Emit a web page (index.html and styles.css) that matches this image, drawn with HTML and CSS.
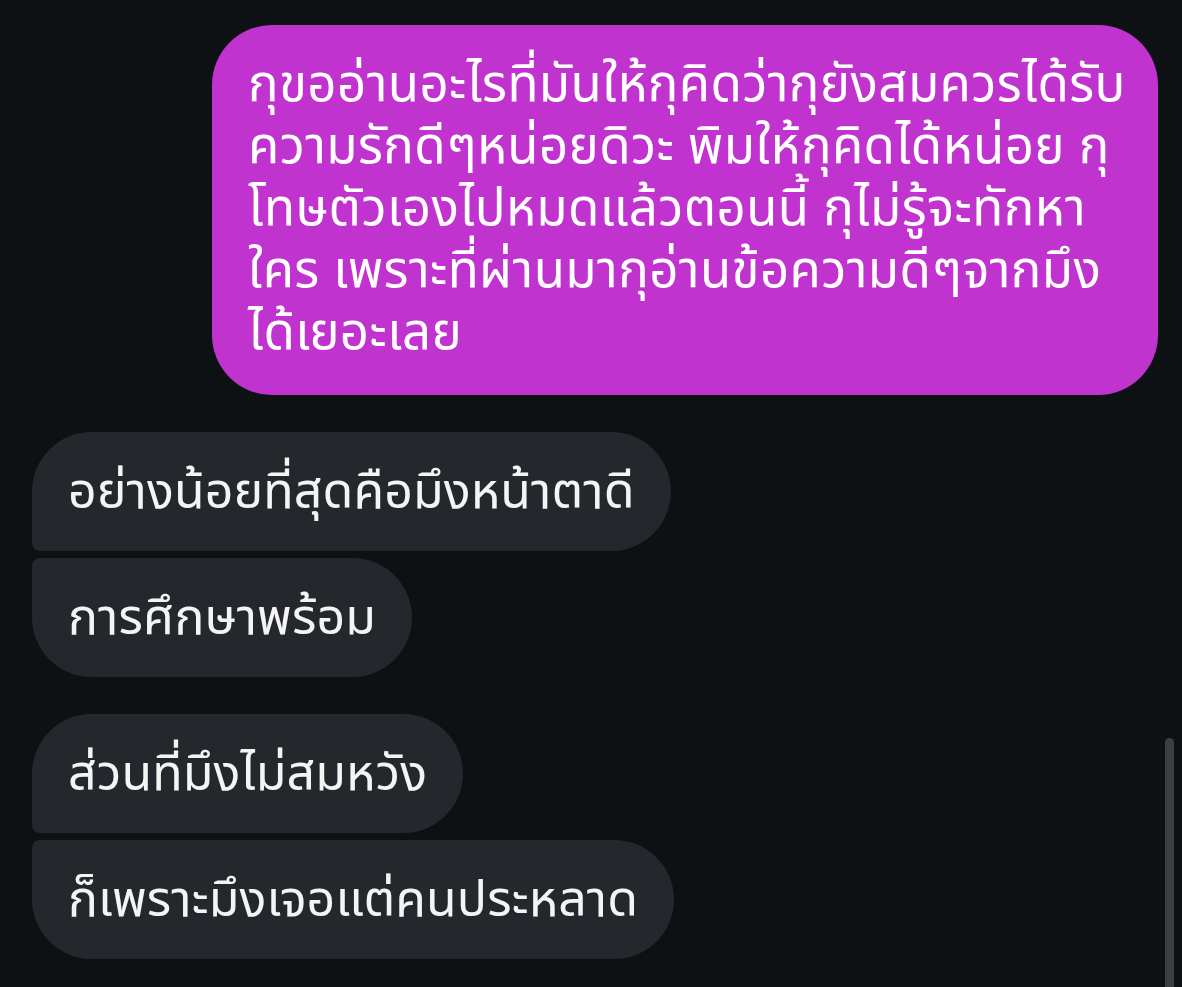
FILE: index.html
```html
<!DOCTYPE html>
<html lang="th">
<head>
    <meta charset="UTF-8">
    <meta name="viewport" content="width=device-width, initial-scale=1.0">
    <title>แชท</title>
    <link rel="stylesheet" href="styles.css">
</head>
<body>
    <div class="thread">
        <div class="msg-row out">
            <div class="bubble bubble-out">
                กุขออ่านอะไรที่มันให้กุคิดว่ากุยังสมควรได้รับ<br>
                ความรักดีๆหน่อยดิวะ พิมให้กุคิดได้หน่อย กุ<br>
                โทษตัวเองไปหมดแล้วตอนนี้ กุไม่รู้จะทักหา<br>
                ใคร เพราะที่ผ่านมากุอ่านข้อความดีๆจากมึง<br>
                ได้เยอะเลย
            </div>
        </div>

        <div class="group">
            <div class="bubble bubble-in first">อย่างน้อยที่สุดคือมึงหน้าตาดี</div>
            <div class="bubble bubble-in last">การศึกษาพร้อม</div>
        </div>

        <div class="group">
            <div class="bubble bubble-in first">ส่วนที่มึงไม่สมหวัง</div>
            <div class="bubble bubble-in last">ก็เพราะมึงเจอแต่คนประหลาด</div>
        </div>
    </div>

    <div class="scrollbar"></div>
</body>
</html>
```

FILE: styles.css
```css
* {
    box-sizing: border-box;
    margin: 0;
    padding: 0;
}

html, body {
    height: 100%;
}

body {
    font-family: "Noto Sans Thai", "Noto Sans", "DejaVu Sans", sans-serif;
    background-color: #0d1114;
    color: #f4f4f4;
    overflow: hidden;
}

.thread {
    display: flex;
    flex-direction: column;
    gap: 37px;
    padding: 25px 24px 0 32px;
}

.msg-row.out {
    display: flex;
    justify-content: flex-end;
}

.group {
    display: flex;
    flex-direction: column;
    align-items: flex-start;
    gap: 7px;
}

.bubble {
    font-size: 50px;
    line-height: 62px;
    letter-spacing: 0.1px;
    white-space: nowrap;
}

.bubble-out {
    width: 946px;
    padding: 30px 36px 30px;
    font-size: 51px;
    letter-spacing: 0.4px;
    background-color: #c133cf;
    color: #fff;
    border-radius: 60px;
}

.bubble-in {
    padding: 30px 36px 27px;
    background-color: #24282c;
    border-radius: 60px;
}

.bubble-in.first {
    border-bottom-left-radius: 8px;
}

.bubble-in.last {
    border-top-left-radius: 8px;
}

/* thin overlay scrollbar on the right edge */
.scrollbar {
    position: fixed;
    right: 8px;
    top: 738px;
    bottom: 0;
    width: 9px;
    background-color: #3a3f43;
    border-radius: 5px 5px 0 0;
}
```
